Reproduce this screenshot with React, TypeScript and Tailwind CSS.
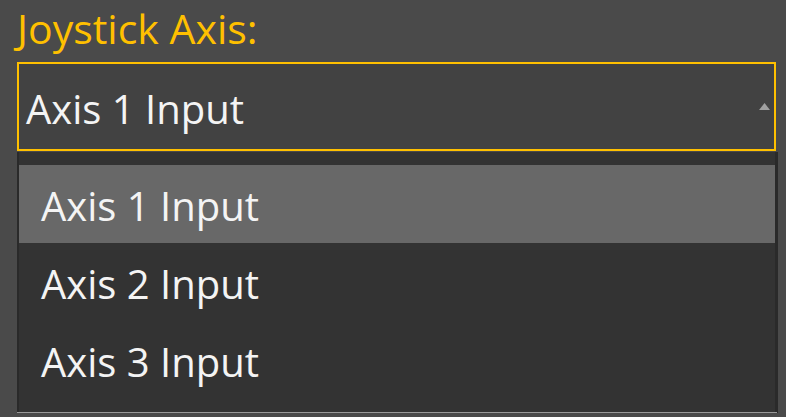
import React from "react";

export default function App() {
  const items = ["Axis 1 Input", "Axis 2 Input", "Axis 3 Input"];
  return (
    <div
      className="w-[786px] h-[417px] bg-[#4a4a4a] overflow-hidden relative"
      style={{ fontFamily: '"Open Sans", "Noto Sans", sans-serif' }}
    >
      <div className="pl-[17px] pt-[3px] text-[41px] leading-[50px] text-[#ffc000]">
        Joystick Axis:
      </div>
      <div className="ml-[17px] mt-[9px] w-[759px] h-[89px] border-2 border-[#ffc000] bg-[#424242] flex items-center justify-between pl-[7px] pr-[4px]">
        <span className="text-[40px] leading-[50px] text-[#f4f4f4] pt-[5px]">Axis 1 Input</span>
        <svg width="11" height="7" viewBox="0 0 11 7">
          <polygon points="5.5,0 11,7 0,7" fill="#a0a0a0" />
        </svg>
      </div>
      <div className="absolute left-[17px] top-[152px] w-[761px] h-[261px] bg-[#2a2a2a] pl-[2px] pr-[3px]">
        <div className="h-[260px] bg-[#333333] pt-[13px] flex flex-col">
          {items.map((t, i) => (
            <div
              key={t}
              className={`h-[78px] flex items-center pl-[22px] pt-[3px] text-[40px] text-[#f4f4f4] ${
                i === 0 ? "bg-[#686868]" : ""
              }`}
            >
              {t}
            </div>
          ))}
        </div>
        <div className="h-[1px] bg-[#9a9a9a] -ml-[2px] -mr-[2px]" />
      </div>
    </div>
  );
}
